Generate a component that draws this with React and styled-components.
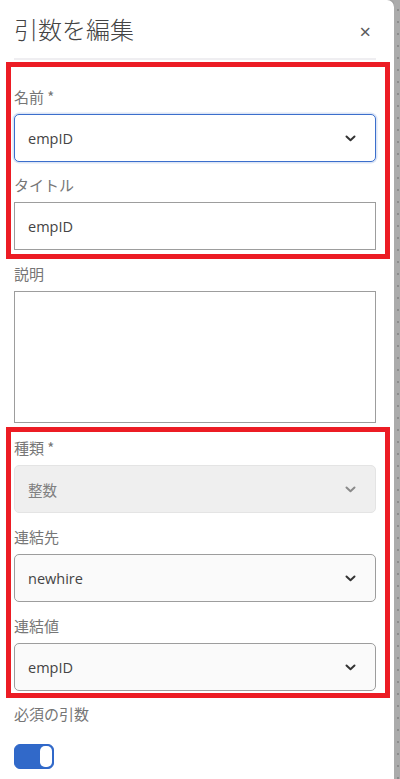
import React from 'react'
import styled, { createGlobalStyle } from 'styled-components'

const GlobalStyle = createGlobalStyle`
  body {
    margin: 0;
    background: #ababab;
    font-family: 'Noto Sans', 'Noto Sans CJK JP', sans-serif;
  }
`

const Chevron = ({ color }) => (
  <svg width='11' height='7' viewBox='0 0 11 7'>
    <polyline
      points='1.5,1.5 5.5,5.2 9.5,1.5'
      fill='none'
      stroke={color}
      strokeWidth='2'
      strokeLinecap='round'
      strokeLinejoin='round'
    />
  </svg>
)

const App = () => {
  return (
    <>
      <GlobalStyle />
      <Shell>
        <Panel>
          <Header>
            <Title>引数を編集</Title>
            <Close>×</Close>
          </Header>
          <Divider />

          {/* name + title */}
          <Marked $padTop={20} $padBottom={4} $gap={13}>
            <Field>
              <Label>名前 *</Label>
              <Select $focused>
                <span>empID</span>
                <Chevron color='#333' />
              </Select>
            </Field>
            <Field>
              <Label>タイトル</Label>
              <TextBox>empID</TextBox>
            </Field>
          </Marked>

          <Field $top={5}>
            <Label>説明</Label>
            <TextArea />
          </Field>

          {/* type + binding */}
          <Marked $top={4} $padTop={6} $padBottom={2} $gap={14}>
            <Field>
              <Label>種類 *</Label>
              <Select $disabled>
                <span>整数</span>
                <Chevron color='#8a8a8a' />
              </Select>
            </Field>
            <Field>
              <Label>連結先</Label>
              <Select>
                <span>newhire</span>
                <Chevron color='#333' />
              </Select>
            </Field>
            <Field>
              <Label>連結値</Label>
              <Select>
                <span>empID</span>
                <Chevron color='#333' />
              </Select>
            </Field>
          </Marked>

          <Field $top={6}>
            <Label>必須の引数</Label>
            <Toggle>
              <Knob />
            </Toggle>
          </Field>
        </Panel>
        <Strip />
      </Shell>
    </>
  )
}

const Shell = styled.div`
  display: flex;
  height: 779px;
  overflow: hidden;
`

const Panel = styled.div`
  width: 394px;
  flex-shrink: 0;
  box-sizing: border-box;
  padding: 0 18px 0 14px;
  background: #fff;
  border-top-right-radius: 7px;
  box-shadow: 1px 0 2px rgba(0, 0, 0, 0.12);
`

const Strip = styled.div`
  flex: 1;
  background-color: #ababab;
  background-image: radial-gradient(circle, #8c8c8c 0.8px, transparent 1.2px);
  background-size: 4px 12px;
  background-repeat: repeat-y;
  background-position: 2px 4px;
`

const Header = styled.div`
  display: flex;
  align-items: center;
  justify-content: space-between;
  height: 58px;
`

const Title = styled.h2`
  margin: 0;
  font-family: 'Noto Sans CJK JP', sans-serif;
  font-size: 24px;
  font-weight: 300;
  line-height: 32px;
  color: #444;
`

const Close = styled.span`
  margin: 6px 5px 0 0;
  font-size: 20px;
  line-height: 20px;
  color: #5c5c5c;
`

const Divider = styled.div`
  height: 2px;
  background: #efeef1;
  margin-bottom: 2px;
`

const Marked = styled.div`
  margin: ${(p) => p.$top || 0}px -14px 0 -8px;
  padding: ${(p) => p.$padTop}px 9px ${(p) => p.$padBottom}px 3px;
  border: 5px solid #ec1c24;
  display: flex;
  flex-direction: column;
  gap: ${(p) => p.$gap}px;
`

const Field = styled.div`
  display: flex;
  flex-direction: column;
  margin-top: ${(p) => p.$top || 0}px;
`

const Label = styled.label`
  font-family: 'Noto Sans CJK JP', sans-serif;
  font-size: 15px;
  font-weight: 400;
  line-height: 20px;
  color: #767676;
  margin-bottom: 7px;
`

const Select = styled.div`
  height: 48px;
  box-sizing: border-box;
  display: flex;
  align-items: center;
  justify-content: space-between;
  padding: 0 19px 0 13px;
  border-radius: 5px;
  font-size: 14.5px;
  color: ${(p) => (p.$disabled ? '#808080' : '#444')};
  background: ${(p) =>
    p.$focused ? '#fff' : p.$disabled ? '#efefef' : '#fafafa'};
  border: 1px solid
    ${(p) => (p.$focused ? '#3b6fcc' : p.$disabled ? '#e4e4e4' : '#9d9d9d')};
  box-shadow: ${(p) =>
    p.$focused ? '0 0 0 1.5px rgba(59, 111, 204, 0.18)' : 'none'};
  span {
    font-family: 'Open Sans', 'Noto Sans CJK JP', sans-serif;
    font-weight: 400;
  }
`

const TextBox = styled.div`
  height: 48px;
  box-sizing: border-box;
  display: flex;
  align-items: center;
  padding: 0 13px;
  border: 1px solid #9d9d9d;
  font-family: 'Open Sans', sans-serif;
  font-size: 14.5px;
  color: #444;
`

const TextArea = styled.div`
  height: 132px;
  box-sizing: border-box;
  border: 1px solid #9d9d9d;
`

const Toggle = styled.div`
  margin-top: 13px;
  width: 40px;
  height: 25px;
  box-sizing: border-box;
  border: 1px solid #2f67c9;
  border-radius: 6px;
  background: #3169c9;
  display: flex;
  justify-content: flex-end;
  align-items: stretch;
  padding: 1px;
`

const Knob = styled.div`
  width: 12px;
  background: #fff;
  border-radius: 5px;
`

export default App
